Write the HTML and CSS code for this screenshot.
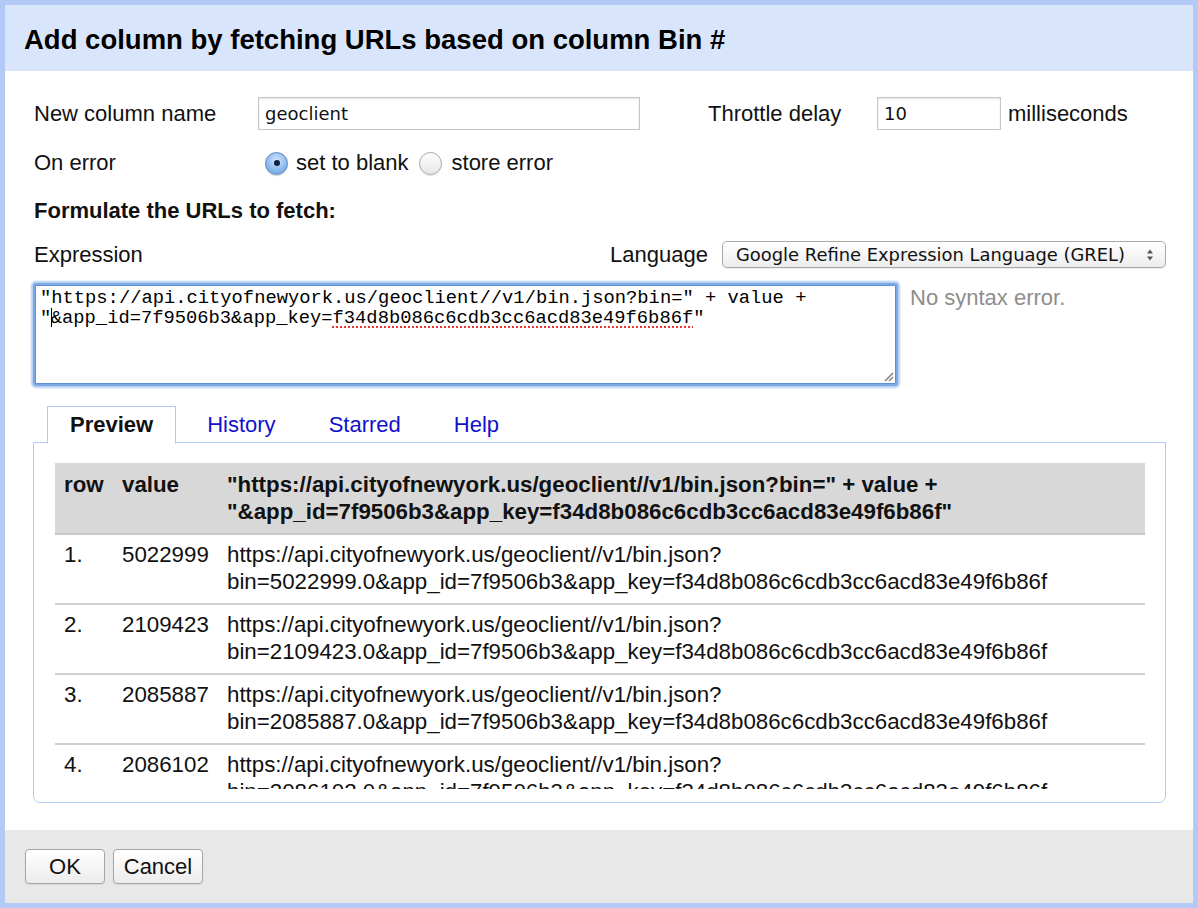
FILE: index.html
```html
<!DOCTYPE html>
<html>
<head>
<meta charset="utf-8">
<link rel="stylesheet" href="styles.css">
</head>
<body>
<div class="dialog">
  <div class="dlg-header">Add column by fetching URLs based on column Bin #</div>
  <div class="dlg-body">
    <div class="row row-name">
      <span class="lbl lbl-first">New column name</span>
      <input class="txt txt-name" type="text" value="geoclient">
      <span class="lbl lbl-throttle">Throttle delay</span>
      <input class="txt txt-delay" type="text" value="10">
      <span class="lbl lbl-ms">milliseconds</span>
    </div>
    <div class="row row-error">
      <span class="lbl lbl-first">On error</span>
      <span class="radio radio-on"></span>
      <span class="lbl radio-lbl">set to blank</span>
      <span class="radio radio-off"></span>
      <span class="lbl radio-lbl2">store error</span>
    </div>
    <div class="row row-formulate">Formulate the URLs to fetch:</div>
    <div class="row row-expr">
      <span class="lbl lbl-expr">Expression</span>
      <span class="lbl lbl-lang">Language</span>
      <div class="select">
        <span class="select-text">Google Refine Expression Language (GREL)</span>
        <svg class="select-arrows" width="10" height="16" viewBox="0 0 10 16"><path d="M2 6.5 L5 2.5 L8 6.5 Z M2 9.5 L5 13.5 L8 9.5 Z" fill="#555"/></svg>
      </div>
    </div>
    <div class="row row-textarea">
      <div class="textarea">
        <div class="code">"https://api.cityofnewyork.us/geoclient//v1/bin.json?bin=" + value +<br>"<span class="caret"></span>&amp;app_id=7f9506b3&amp;app_key=<span class="spell">f34d8b086c6cdb3cc6acd83e49f6b86f</span>"</div>
        <svg class="grip" width="12" height="12" viewBox="0 0 12 12"><path d="M11 3 L3 11 M11 7 L7 11" stroke="#777" stroke-width="1.3"/></svg>
      </div>
      <div class="status">No syntax error.</div>
    </div>
    <div class="tabs">
      <span class="tab tab-active">Preview</span>
      <span class="tab">History</span>
      <span class="tab">Starred</span>
      <span class="tab">Help</span>
    </div>
    <div class="panel">
      <div class="scroller">
        <table class="preview">
          <colgroup><col class="c-row"><col class="c-val"><col></colgroup>
          <thead>
            <tr><th>row</th><th>value</th><th>"https://api.cityofnewyork.us/geoclient//v1/bin.json?bin=" + value +<br>"&amp;app_id=7f9506b3&amp;app_key=f34d8b086c6cdb3cc6acd83e49f6b86f"</th></tr>
          </thead>
          <tbody>
            <tr><td>1.</td><td>5022999</td><td>https://api.cityofnewyork.us/geoclient//v1/bin.json?<br>bin=5022999.0&amp;app_id=7f9506b3&amp;app_key=f34d8b086c6cdb3cc6acd83e49f6b86f</td></tr>
            <tr><td>2.</td><td>2109423</td><td>https://api.cityofnewyork.us/geoclient//v1/bin.json?<br>bin=2109423.0&amp;app_id=7f9506b3&amp;app_key=f34d8b086c6cdb3cc6acd83e49f6b86f</td></tr>
            <tr><td>3.</td><td>2085887</td><td>https://api.cityofnewyork.us/geoclient//v1/bin.json?<br>bin=2085887.0&amp;app_id=7f9506b3&amp;app_key=f34d8b086c6cdb3cc6acd83e49f6b86f</td></tr>
            <tr><td>4.</td><td>2086102</td><td>https://api.cityofnewyork.us/geoclient//v1/bin.json?<br>bin=2086102.0&amp;app_id=7f9506b3&amp;app_key=f34d8b086c6cdb3cc6acd83e49f6b86f</td></tr>
            <tr><td>5.</td><td>2086103</td><td>https://api.cityofnewyork.us/geoclient//v1/bin.json?<br>bin=2086103.0&amp;app_id=7f9506b3&amp;app_key=f34d8b086c6cdb3cc6acd83e49f6b86f</td></tr>
          </tbody>
        </table>
      </div>
    </div>
  </div>
  <div class="dlg-footer">
    <button class="btn btn-ok">OK</button>
    <button class="btn btn-cancel">Cancel</button>
  </div>
</div>
</body>
</html>
```
FILE: styles.css
```css
* { box-sizing: border-box; }
html, body { margin: 0; padding: 0; background: #fff; }
body {
  font-family: "Liberation Sans", Arial, sans-serif;
  font-size: 22px;
  color: #111;
}
.dialog {
  width: 1198px;
  height: 908px;
  border: 5px solid #b3caf6;
  display: flex;
  flex-direction: column;
  background: #fff;
}
.dlg-header {
  height: 66px;
  flex: none;
  background: #d9e5fb;
  font-weight: bold;
  font-size: 27.5px;
  padding: 3px 0 0 19px;
  display: flex;
  align-items: center;
  color: #000;
}
.dlg-body {
  flex: 1;
  padding: 26px 27px 0 28px;
  display: flex;
  flex-direction: column;
}
.row { display: flex; align-items: center; }
.lbl { white-space: nowrap; }
.lbl-first { width: 225px; padding-left: 1px; }
.row-name { height: 33px; }
.txt {
  height: 33px;
  border: 1px solid #c6c6c6;
  box-shadow: inset 0 1px 2px rgba(0,0,0,0.12);
  font-family: "DejaVu Sans", sans-serif;
  font-size: 18px;
  color: #111;
  padding: 0 6px;
  background: #fff;
}
.txt-name { width: 382px; }
.lbl-throttle { margin-left: 68px; width: 169px; }
.txt-delay { width: 124px; }
.lbl-ms { margin-left: 7px; }
.row-error { margin-top: 19px; height: 28px; }
.radio {
  display: inline-block;
  width: 23px;
  height: 23px;
  border-radius: 50%;
  position: relative;
}
.radio-on {
  margin-left: 7px;
  border: 1px solid #5d84bf;
  background: radial-gradient(circle at 50% 35%, #d4e6fb 0%, #8fbcef 55%, #5d9ae3 100%);
  box-shadow: 0 1px 1px rgba(0,0,0,0.15);
}
.radio-on::after {
  content: "";
  position: absolute;
  width: 6px; height: 6px;
  border-radius: 50%;
  background: #10213f;
  left: 7.5px; top: 7.5px;
}
.radio-off {
  margin-left: 10px;
  border: 1px solid #a9a9a9;
  background: linear-gradient(#fdfdfd, #e6e6e6);
  box-shadow: 0 1px 1px rgba(0,0,0,0.1);
}
.radio-lbl { margin-left: 8px; }
.radio-lbl2 { margin-left: 10px; }
.row-formulate { margin-top: 20px; height: 28px; font-weight: bold; padding-left: 1px; }
.row-expr { margin-top: 16px; height: 27px; }
.lbl-expr { flex: 1; padding-left: 1px; }
.lbl-lang { margin-right: 14px; }
.select {
  width: 444px;
  height: 27px;
  border: 1px solid #a9a9a9;
  border-radius: 5px;
  background: linear-gradient(#ffffff, #ededed);
  display: flex;
  align-items: center;
  padding: 0 10px 0 13px;
  font-family: "DejaVu Sans", sans-serif;
  font-size: 17.9px;
  color: #111;
  box-shadow: 0 1px 1px rgba(0,0,0,0.08);
}
.select-text { flex: 1; white-space: nowrap; }
.row-textarea { margin-top: 15px; align-items: flex-start; }
.textarea {
  width: 865px;
  height: 103px;
  border: 2px solid #7ea9e4;
  border-radius: 3px;
  box-shadow: 0 0 2px 2px #b3cef3, inset 0 0 0 1px #5e8fd2;
  padding: 3px 5px;
  position: relative;
  background: #fff;
}
.code {
  font-family: "Liberation Mono", "Courier New", monospace;
  font-size: 18.8px;
  line-height: 20px;
  color: #000;
  white-space: nowrap;
}
.caret {
  display: inline-block;
  width: 0;
  height: 19px;
  border-left: 1.5px solid #000;
  vertical-align: -4px;
  margin-right: -1.5px;
}
.spell {
  text-decoration: underline dotted #e33;
  text-decoration-thickness: 2px;
  text-underline-offset: 3px;
}
.grip { position: absolute; right: 2px; bottom: 2px; }
.status {
  margin-left: 12px;
  margin-top: 2px;
  color: #8d8d8d;
  white-space: nowrap;
}
.tabs {
  margin-top: 20px;
  height: 37px;
  display: flex;
  padding-left: 14px;
  position: relative;
  z-index: 1;
}
.tab {
  padding: 0 22px;
  margin-right: 9px;
  display: flex;
  align-items: center;
  color: #1111cc;
  height: 37px;
}
.tab-active {
  color: #111;
  font-weight: bold;
  background: #fff;
  border: 1px solid #b3caf6;
  border-bottom: 1px solid #fff;
  height: 38px;
  padding: 0 22px;
}
.panel {
  margin-top: -1px;
  height: 361px;
  border: 1px solid #b3caf6;
  border-radius: 0 0 7px 7px;
  padding: 20px 20px 12px 21px;
}
.scroller {
  height: 326px;
  overflow: hidden;
}
.preview {
  width: 100%;
  border-collapse: collapse;
  font-size: 22.3px;
  line-height: 27px;
}
.c-row { width: 58px; }
.c-val { width: 105px; }
.preview th {
  background: #d8d8d8;
  text-align: left;
  font-weight: bold;
  padding: 8px 9px 8px 9px;
  vertical-align: top;
  border-bottom: 2px solid #c9c9c9;
  white-space: nowrap;
}
.preview td {
  padding: 6px 9px 8px 9px;
  vertical-align: top;
  border-bottom: 2px solid #d0d0d0;
  white-space: nowrap;
}
.dlg-footer {
  height: 73px;
  flex: none;
  background: #e8e8e8;
  padding: 19px 0 0 20px;
  display: flex;
  align-items: flex-start;
  gap: 8px;
}
.btn {
  height: 35px;
  border: 1px solid #a6a6a6;
  border-radius: 4px;
  background: linear-gradient(#ffffff, #ececec);
  font-family: "Liberation Sans", Arial, sans-serif;
  font-size: 22px;
  line-height: 25px;
  color: #111;
  padding: 0;
  box-shadow: 0 1px 1px rgba(0,0,0,0.08);
}
.btn-ok { width: 80px; }
.btn-cancel { width: 90px; }
```
